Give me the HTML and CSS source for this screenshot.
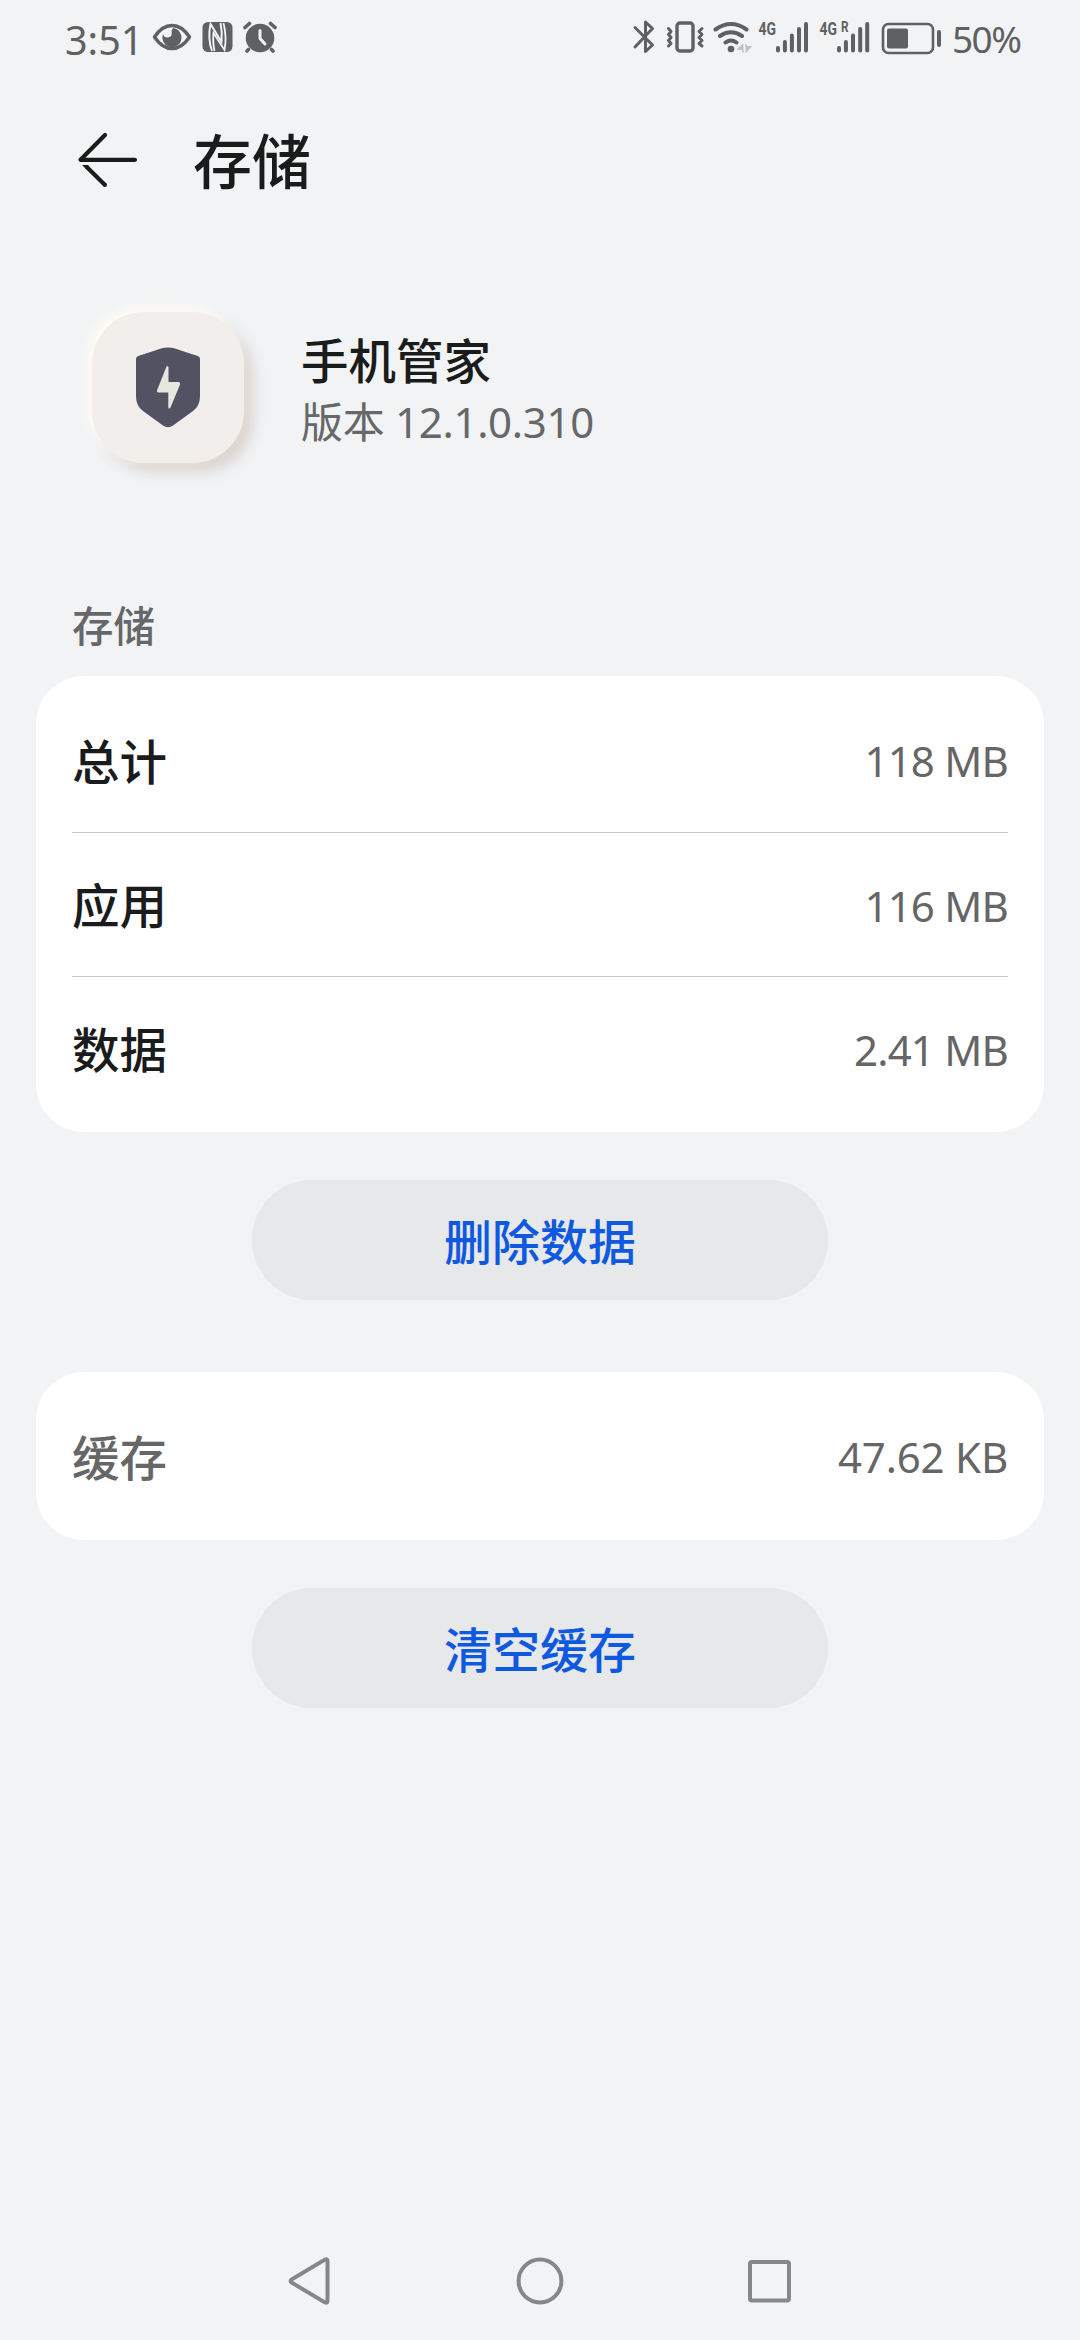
FILE: index.html
```html
<!DOCTYPE html>
<html lang="zh-CN">
<head>
<meta charset="utf-8">
<title>存储</title>
<link rel="stylesheet" href="styles.css">
</head>
<body>
<div class="screen">
  <header class="status">
    <div class="status-group">
      <span class="clock">3:51</span>
      <svg width="52" height="40" viewBox="146 18 52 40" fill="none">
        <path d="M154.500 37Q162 25.500 172 25.500T189.500 37Q182 48.500 172 48.500T154.500 37Z" stroke="#5f6062" stroke-width="3.400" stroke-linejoin="round"/>
        <path d="M173 28A9.600 9.600 0 1 1 163 34Q164 38 168 37.500Q173 36.500 171.500 31Z" fill="#5f6062"/>
      </svg>
      <svg width="41" height="40" viewBox="198 18 41 40" fill="none">
        <rect x="202.500" y="22" width="30" height="30" rx="5.500" fill="#5f6062"/>
        <path d="M212 51Q207.500 38 210.500 24L221.500 42Q222.500 32 220.500 23" stroke="#f1f3f5" stroke-width="2"/>
        <path d="M214.500 51Q212.500 41 213.500 33L224.500 50Q227 37 223.500 23" stroke="#f1f3f5" stroke-width="1.800"/>
      </svg>
      <svg width="44" height="40" viewBox="239 18 44 40" fill="none">
        <circle cx="260" cy="38" r="14.300" fill="#5f6062"/>
        <path d="M245 27.500L249.500 23.500M275 27.500L270.500 23.500M248.500 49.500L247 51M271.500 49.500L273 51" stroke="#5f6062" stroke-width="3.600" stroke-linecap="round"/>
        <path d="M260 30.500V38.500L265 44" stroke="#f1f3f5" stroke-width="3" stroke-linecap="round" stroke-linejoin="round"/>
      </svg>
    </div>
    <div class="status-group">
      <svg width="32" height="40" viewBox="628 18 32 40" fill="none" stroke="#5f6062" stroke-width="3" stroke-linecap="round" stroke-linejoin="round">
        <path d="M635 27.500L652.500 45L645.500 51.500V22L652.500 28.500L635 47"/>
      </svg>
      <svg width="48" height="40" viewBox="660 18 48 40" fill="none" stroke="#5f6062" stroke-width="3.400" stroke-linecap="round" stroke-linejoin="round">
        <rect x="677" y="23" width="16" height="28" rx="3"/>
        <path stroke-width="3" d="M668.500 28.500L671 31.500L668.500 34.500L671 37.500L668.500 40.500L671 43.500L668.500 46M702 28.500L699 31.500L702 34.500L699 37.500L702 40.500L699 43.500L702 46"/>
      </svg>
      <svg width="48" height="40" viewBox="708 18 48 40" fill="none" stroke="#5f6062" stroke-width="4" stroke-linecap="round">
        <path d="M715.500 29.500Q731 18.500 746.500 29.500M720 36Q731 28.500 742 36M725.500 42.500Q731 38.500 736.500 42.500"/>
        <circle cx="731" cy="49" r="3.300" fill="#5f6062" stroke="none"/>
        <path d="M738 48.500L743 44V52.500V49.500H738ZM746 44.500V52.500L751.500 46.500H746Z" fill="#c0c2c4" stroke="#c0c2c4" stroke-width="1"/>
      </svg>
      <svg width="60" height="40" viewBox="756 18 60 40">
        <text class="net" x="758.500" y="35.300" textLength="17.500" lengthAdjust="spacingAndGlyphs">4G</text>
        <path d="M778 48V50.500M784.900 42V50.500M791.900 35.500V50.500M799 29V50.500M806 24V50.500" stroke="#5f6062" stroke-width="4" stroke-linecap="round"/>
      </svg>
      <svg width="62" height="40" viewBox="816 18 62 40">
        <text class="net" x="819.500" y="35.300" textLength="17.500" lengthAdjust="spacingAndGlyphs">4G</text>
        <text class="net net-small" x="841" y="32.300" textLength="7.500" lengthAdjust="spacingAndGlyphs">R</text>
        <path d="M839 48V50.500M845.900 42V50.500M853 35.500V50.500M860.200 29V50.500M867.200 24V50.500" stroke="#5f6062" stroke-width="4" stroke-linecap="round"/>
      </svg>
      <svg width="74" height="40" viewBox="878 18 74 40">
        <rect x="883" y="24" width="50" height="29" rx="5.500" fill="none" stroke="#5f6062" stroke-width="2.600"/>
        <rect x="887" y="28.500" width="21" height="20" rx="2" fill="#5f6062"/>
        <rect x="937" y="30" width="4" height="17" rx="2" fill="#5f6062"/>
      </svg>
      <span class="battery-level">50%</span>
    </div>
  </header>

  <div class="titlebar">
    <svg width="64" height="60" viewBox="76 129 64 60" fill="none" stroke="#1a1b1b" stroke-width="4.200" stroke-linecap="round" stroke-linejoin="round">
      <path d="M105 134L80.500 158.800H135"/>
      <path d="M105 184L86.500 165.800" stroke-linecap="butt"/>
      <circle cx="104.900" cy="183.900" r="2.100" fill="#1a1b1b" stroke="none"/>
      <path d="M82 163.900H88L90 168H86Z" fill="#1a1b1b" stroke="none"/>
    </svg>
    <h1>存储</h1>
  </div>

  <section class="app">
    <div class="app-icon">
      <svg width="66" height="82" viewBox="0 0 66 82">
        <path d="M1 12Q1 10 3 9Q16 5 26 1.500Q33 -.3 40 1.500Q50 5 63 9Q65 10 65 12V49Q65 59 58 64L38 78.500Q33 82 28 78.500L8 64Q1 59 1 49Z" fill="#515363"/>
        <path d="M31.500 19.500Q33 18 33.500 20.500V35H43.500Q45.500 35 45 37.500L35.500 60.500Q33.500 63 33.300 60V45.500H23.500Q21.500 45.500 22.200 43Z" fill="#e7e7df"/>
      </svg>
    </div>
    <div class="app-text">
      <div class="app-name">手机管家</div>
      <div class="app-version">版本 12.1.0.310</div>
    </div>
  </section>

  <h2>存储</h2>
  <div class="card">
    <div class="row"><span class="label">总计</span><span class="value">118 MB</span></div>
    <div class="row"><span class="label">应用</span><span class="value">116 MB</span></div>
    <div class="row"><span class="label">数据</span><span class="value">2.41 MB</span></div>
  </div>
  <button class="action" type="button">删除数据</button>

  <div class="card">
    <div class="row muted"><span class="label">缓存</span><span class="value value-kb">47.62 KB</span></div>
  </div>
  <button class="action" type="button">清空缓存</button>

  <nav class="navbar">
    <svg width="60" height="60" viewBox="0 0 60 60"><path d="M11.500 29.500Q10 31 11.500 32.500L45 52.500Q47.500 53.500 47.500 51V11Q47.500 8.500 45 9.500Z"/></svg>
    <svg width="60" height="60" viewBox="0 0 60 60"><circle cx="30" cy="31" r="21.400"/></svg>
    <svg width="60" height="60" viewBox="0 0 60 60"><rect x="10" y="12" width="39" height="38.500" rx="2"/></svg>
  </nav>
</div>
</body>
</html>
```

FILE: styles.css
```css
* { box-sizing: border-box; margin: 0; padding: 0; }

body {
  background: #f1f3f5;
  color: #1a1b1b;
  font-family: "Noto Sans", "Noto Sans CJK SC", sans-serif;
}

svg { display: block; flex: none; }

.screen {
  width: 1080px;
  height: 2340px;
  display: flex;
  flex-direction: column;
  overflow: hidden;
}

.status {
  height: 76px;
  padding: 0 59px 0 65px;
  display: flex;
  justify-content: space-between;
  align-items: center;
  color: #5f6062;
  white-space: nowrap;
}

.status-group { display: flex; align-items: center; }
.clock { width: 81px; font-size: 39.5px; line-height: 76px; padding-top: 3px; }
.battery-level { width: 69px; font-size: 37px; line-height: 76px; padding-top: 2px; letter-spacing: -1.6px; }
.net { font: 700 18.5px "Roboto", sans-serif; fill: #5f6062; }
.net-small { font-size: 14px; }

.titlebar {
  height: 168px;
  padding: 0 76px;
  display: flex;
  align-items: center;
  gap: 53px;
}

h1 { font-size: 59px; font-weight: 500; line-height: 84px; padding-top: 2px; }

.app {
  height: 342px;
  padding: 68px 92px 0;
  display: flex;
  gap: 57px;
}

.app-icon {
  width: 152px;
  height: 151px;
  border-radius: 52px;
  background: #f1eeeb;
  box-shadow: -5px -5px 12px #fffcf4, 9px 9px 14px #dbd4cf;
  display: flex;
  align-items: center;
  justify-content: center;
}

.app-text { padding-top: 17px; white-space: nowrap; }
.app-name { font-size: 47.5px; font-weight: 500; line-height: 64px; }
.app-version { font-size: 42px; line-height: 58px; letter-spacing: -0.3px; color: #666768; }

h2 {
  height: 90px;
  padding: 10px 72px 0;
  font-size: 41.5px;
  font-weight: 500;
  line-height: 60px;
  color: #666768;
}

.card {
  margin: 0 36px;
  padding: 12px 36px;
  border-radius: 48px;
  background: #fff;
}

.row {
  height: 144px;
  display: flex;
  align-items: center;
  justify-content: space-between;
  font-size: 47.5px;
  font-weight: 500;
  white-space: nowrap;
}

.row + .row { border-top: 1px solid #c8c9ca; }
.label { padding-bottom: 2px; }
.muted, .value { color: #666; }
.value { padding-top: 1px; font-size: 42px; font-weight: 400; letter-spacing: -0.8px; }
.value-kb { letter-spacing: -0.2px; }

.action {
  width: 576px;
  height: 120px;
  margin: 48px auto 72px;
  padding-bottom: 3px;
  border: 0;
  border-radius: 60px;
  background: #e6e8e9;
  color: #0f59e0;
  font: inherit;
  font-size: 48px;
  font-weight: 500;
}

.navbar {
  height: 120px;
  margin-top: auto;
  padding: 0 280px;
  display: flex;
  align-items: center;
  justify-content: space-between;
}

.navbar svg { fill: none; stroke: #868788; stroke-width: 4; }
```
